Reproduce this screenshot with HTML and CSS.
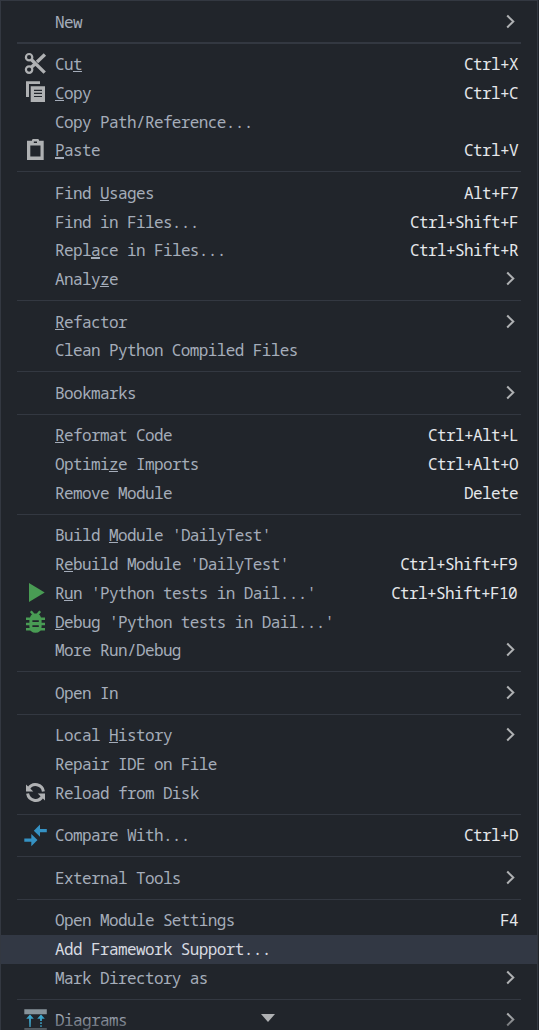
FILE: index.html
```html
<!DOCTYPE html>
<html lang="en">
<head>
<meta charset="utf-8">
<title>Context menu</title>
<link rel="stylesheet" href="styles.css">
</head>
<body>
<svg class="defs" width="0" height="0"><symbol id="chev" viewBox="0 0 9 15"><path d="M1.2 1.5 7.3 7.5 1.2 13.5" fill="none" stroke="#afb1b3" stroke-width="2"/></symbol></svg>
<div class="menu">
<div class="row"><span class="icon"></span><span class="label">New</span><svg class="chev"><use href="#chev"/></svg></div>
<div class="sep small thick"></div>
<div class="row"><svg class="icon" viewBox="0 0 24 28"><g fill="none" stroke="#afb1b3"><circle cx="5.1" cy="7.2" r="3.2" stroke-width="2.2"/><circle cx="5.1" cy="19.6" r="3.2" stroke-width="2.2"/><path d="M7 9.2 20.7 22.6M7 17.6 11 13.9M13 12 20.9 4.6" stroke-width="3.4"/></g></svg><span class="label">Cu<u>t</u></span><span class="key">Ctrl+X</span></div>
<div class="row"><svg class="icon" viewBox="0 0 24 28"><path fill="#afb1b3" d="M2 2.3H16V5H5V18H2ZM6.7 7.2H21V23H6.7Z"/><path stroke="#21252b" stroke-width="1.2" d="M10 11.3H18M10 14.4H18M10 17.5H18"/></svg><span class="label"><u>C</u>opy</span><span class="key">Ctrl+C</span></div>
<div class="row short"><span class="icon"></span><span class="label">Copy Path/Reference...</span></div>
<div class="row"><svg class="icon" viewBox="0 0 24 28"><path fill="#afb1b3" fill-rule="evenodd" d="M3 4.7H8V3.8L9 3H14L15 3.8V4.7H19.7V24H3ZM6.3 9.6V20.6H16.5V9.6ZM9.8 5.4V7H13V5.4Z"/></svg><span class="label"><u class="bold">P</u>aste</span><span class="key">Ctrl+V</span></div>
<div class="sep"></div>
<div class="row"><span class="icon"></span><span class="label">Find <u>U</u>sages</span><span class="key">Alt+F7</span></div>
<div class="row short"><span class="icon"></span><span class="label">Find in Files...</span><span class="key">Ctrl+Shift+F</span></div>
<div class="row"><span class="icon"></span><span class="label">Repl<u class="bold">a</u>ce in Files...</span><span class="key">Ctrl+Shift+R</span></div>
<div class="row"><span class="icon"></span><span class="label">Analy<u>z</u>e</span><svg class="chev"><use href="#chev"/></svg></div>
<div class="sep"></div>
<div class="row short"><span class="icon"></span><span class="label"><u>R</u>efactor</span><svg class="chev"><use href="#chev"/></svg></div>
<div class="row"><span class="icon"></span><span class="label">Clean Python Compiled Files</span></div>
<div class="sep"></div>
<div class="row"><span class="icon"></span><span class="label">Bookmarks</span><svg class="chev"><use href="#chev"/></svg></div>
<div class="sep small"></div>
<div class="row"><span class="icon"></span><span class="label"><u>R</u>eformat Code</span><span class="key">Ctrl+Alt+L</span></div>
<div class="row"><span class="icon"></span><span class="label">Optimi<u>z</u>e Imports</span><span class="key">Ctrl+Alt+O</span></div>
<div class="row"><span class="icon"></span><span class="label">Remove Module</span><span class="key">Delete</span></div>
<div class="sep small"></div>
<div class="row"><span class="icon"></span><span class="label">Build <u>M</u>odule 'DailyTest'</span></div>
<div class="row"><span class="icon"></span><span class="label">R<u>e</u>build Module 'DailyTest'</span><span class="key long">Ctrl+Shift+F9</span></div>
<div class="row"><svg class="icon" viewBox="0 0 24 28"><path fill="#499c54" d="M5 4 20.7 13.5 5 23Z"/></svg><span class="label">R<u>u</u>n 'Python tests in Dail...'</span><span class="key long">Ctrl+Shift+F10</span></div>
<div class="row short"><svg class="icon" viewBox="0 0 24 28"><path fill="none" stroke="#499c54" stroke-width="2.4" d="M6.8 3.2 9.8 6.8M16.2 3.2 13.2 6.8M2 10.7H21M2 16H21M2 21.3H21"/><path fill="#499c54" d="M6 9.8Q7 5.6 11.5 5.6T17 9.8L17.6 11V19Q17 24.8 11.5 24.8T5.4 19V11Z"/><path stroke="#21252b" stroke-width="1.7" d="M8.4 13.2H14.8M8.4 18.2H14.8"/></svg><span class="label"><u>D</u>ebug 'Python tests in Dail...'</span></div>
<div class="row"><span class="icon"></span><span class="label">More Run/Debug</span><svg class="chev"><use href="#chev"/></svg></div>
<div class="sep"></div>
<div class="row"><span class="icon"></span><span class="label">Open In</span><svg class="chev"><use href="#chev"/></svg></div>
<div class="sep small"></div>
<div class="row"><span class="icon"></span><span class="label">Local <u>H</u>istory</span><svg class="chev"><use href="#chev"/></svg></div>
<div class="row"><span class="icon"></span><span class="label">Repair IDE on File</span></div>
<div class="row"><svg class="icon" viewBox="0 0 24 28"><g fill="none" stroke="#afb1b3" stroke-width="3"><path d="M4.7 9.4A8 8 0 0 1 19.4 12.4"/><path d="M18.3 17.6A8 8 0 0 1 3.6 14.6"/></g><path fill="#afb1b3" d="M2 5.4V12.5H9.3ZM21 21.6V14.5H13.7Z"/></svg><span class="label">Reload from Disk</span></div>
<div class="sep small"></div>
<div class="row"><svg class="icon" viewBox="0 0 24 28"><path fill="#3592c4" d="M9.8 9.7 16 3.6V8.1H22.8V11.2H16V15.8ZM13.5 19.1 7.3 13V17.6H.3V20.7H7.3V25.3Z"/></svg><span class="label">Compare With...</span><span class="key">Ctrl+D</span></div>
<div class="sep"></div>
<div class="row"><span class="icon"></span><span class="label">External Tools</span><svg class="chev"><use href="#chev"/></svg></div>
<div class="sep small"></div>
<div class="row"><span class="icon"></span><span class="label">Open Module Settings</span><span class="key">F4</span></div>
<div class="row active"><span class="icon"></span><span class="label">Add Framework Support...</span></div>
<div class="row"><span class="icon"></span><span class="label">Mark Directory as</span><svg class="chev"><use href="#chev"/></svg></div>
<div class="sep small"></div>
<div class="row cut"><svg class="icon" viewBox="0 0 24 28"><path fill="#87939a" d="M.3 3.2H22.8V8.3H.3ZM.3 22H22.8V26H.3Z"/><path fill="#40b6e0" d="M6 8.4 9.8 12.8H7V21H5V12.8H2.2ZM17 8.4 20.8 12.8H18V15H16V12.8H13.2ZM16 16.3H18V18H16ZM16 19.3H18V21H16Z"/></svg><span class="label">Diagrams</span><svg class="chev"><use href="#chev"/></svg></div>
<div class="fade"></div>
<svg class="more" viewBox="0 0 14 8"><path fill="#afb1b3" d="M0 0H14L7 8Z"/></svg>
</div>
</body>
</html>
```
FILE: styles.css
```css
* { box-sizing: border-box; }
body {
  margin: 0;
  background: #21252b;
}
.defs { position: absolute; }
.menu {
  position: relative;
  width: 538px;
  height: 1030px;
  padding-top: 7px;
  overflow: hidden;
  border: 1px solid #333841;
  border-bottom: 0;
  background: #21252b;
  color: #a5adba;
  font: 16px/28px "Noto Sans Mono", "DejaVu Sans Mono", monospace;
  letter-spacing: -0.61px;
}
.row {
  display: flex;
  align-items: flex-start;
  height: 29px;
  padding: 0 19px 0 23px;
}
.short { height: 28px; }
.cut { height: 24px; }
.icon {
  flex: none;
  width: 24px;
  height: 28px;
  margin-right: 7px;
}
.label { flex: 1; white-space: nowrap; }
.key { color: #e6e8eb; }
.long { padding-right: 1px; }
u {
  text-decoration: underline 1px;
  text-underline-offset: 1px;
  text-decoration-skip-ink: none;
}
.bold { text-decoration-thickness: 2px; }
.chev {
  width: 9px;
  height: 15px;
  margin: 6px 3px 0 0;
}
.sep {
  height: 14px;
  padding: 6px 16px 0;
}
.sep::before {
  content: "";
  display: block;
  height: 1px;
  background: #333841;
}
.small { height: 13px; }
.thick { padding-top: 5px; }
.thick::before { height: 2px; }
.active {
  background: #323844;
  color: #d7dae0;
}
.fade {
  position: absolute;
  left: 0;
  right: 0;
  bottom: 0;
  height: 16px;
  background: linear-gradient(#21252b00, #21252b90);
}
.more {
  position: absolute;
  left: 260px;
  bottom: 8px;
  width: 14px;
  height: 8px;
}
```
